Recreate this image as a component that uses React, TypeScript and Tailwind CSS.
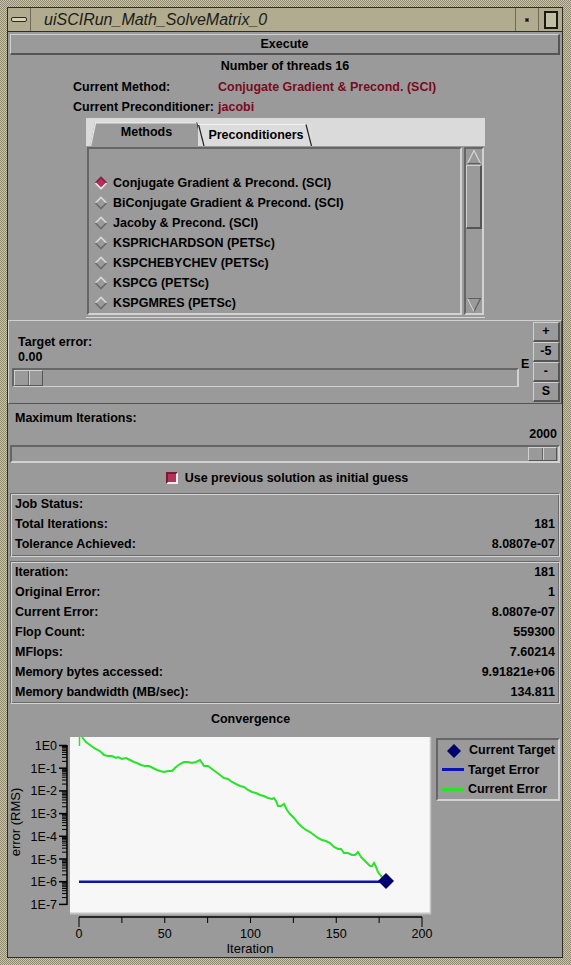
import React from "react";

const methods = [
  "Conjugate Gradient & Precond. (SCI)",
  "BiConjugate Gradient & Precond. (SCI)",
  "Jacoby & Precond. (SCI)",
  "KSPRICHARDSON (PETSc)",
  "KSPCHEBYCHEV (PETSc)",
  "KSPCG (PETSc)",
  "KSPGMRES (PETSc)",
];

const jobRows = [
  ["Job Status:", ""],
  ["Total Iterations:", "181"],
  ["Tolerance Achieved:", "8.0807e-07"],
];

const statRows = [
  ["Iteration:", "181"],
  ["Original Error:", "1"],
  ["Current Error:", "8.0807e-07"],
  ["Flop Count:", "559300"],
  ["MFlops:", "7.60214"],
  ["Memory bytes accessed:", "9.91821e+06"],
  ["Memory bandwidth (MB/sec):", "134.811"],
];

const raised =
  "border border-t-[#d0d0d0] border-l-[#d0d0d0] border-b-[#555555] border-r-[#555555]";
const sunken =
  "border-2 border-t-[#666666] border-l-[#666666] border-b-[#d2d2d2] border-r-[#d2d2d2]";
const groove =
  "border border-t-[#6a6a6a] border-l-[#6a6a6a] border-b-[#d4d4d4] border-r-[#d4d4d4] shadow-[inset_1px_1px_0_#d4d4d4,inset_-1px_-1px_0_#6a6a6a]";

const green: [number, number][] = [
  [82, 737], [86, 742], [90, 745], [94, 748], [98, 750], [101, 752], [104, 755], [108, 756],
  [112, 756], [116, 758], [118, 757], [122, 759], [126, 758], [130, 760], [134, 762], [137, 763],
  [141, 765], [145, 766], [149, 766], [153, 768], [157, 770], [160, 771], [164, 772], [168, 771],
  [172, 771], [176, 767], [180, 764], [184, 762], [188, 762], [192, 763], [196, 762], [200, 760],
  [202, 763], [204, 766], [208, 766], [212, 769], [216, 772], [220, 775], [224, 778], [228, 779],
  [232, 782], [236, 784], [240, 786], [244, 787], [248, 790], [252, 792], [256, 793], [260, 795],
  [264, 796], [268, 798], [272, 799], [274, 798], [276, 801], [278, 806], [281, 806], [284, 804],
  [287, 810], [290, 814], [294, 818], [298, 823], [302, 827], [306, 830], [310, 832], [314, 835],
  [318, 838], [322, 840], [326, 841], [330, 843], [334, 847], [338, 849], [341, 849], [344, 853],
  [348, 853], [352, 855], [355, 855], [358, 852], [361, 857], [364, 860], [367, 863], [370, 866],
  [372, 866], [374, 863], [376, 867], [378, 872], [381, 876], [384, 879], [386, 881],
];

const decadeY = (d: number) => 745.5 + d * 22.7;

function Diamond({ selected }: { selected?: boolean }) {
  return (
    <svg width="14" height="14" viewBox="0 0 14 14" className="shrink-0">
      <polygon points="7,1 13,7 7,13 1,7" fill={selected ? "#b3325a" : "#9a9a9a"} />
      <polyline points="1.5,7 7,1.5 12.5,7" fill="none" stroke={selected ? "#8a1c40" : "#d8d8d8"} strokeWidth="1.6" />
      <polyline points="1.5,7 7,12.5 12.5,7" fill="none" stroke={selected ? "#ececec" : "#6a6a6a"} strokeWidth="1.6" />
    </svg>
  );
}

function Thumb() {
  return (
    <div className={`flex h-full w-[29px] ${raised}`}>
      <div className="flex-1 border-r border-r-[#666666]" />
      <div className="flex-1 border-l border-l-[#d0d0d0]" />
    </div>
  );
}

function Chart() {
  const minor: number[] = [];
  for (let d = 0; d < 7; d++) {
    for (let k = 2; k <= 9; k++) minor.push(decadeY(d + 1) - Math.log10(k) * 22.7);
  }
  const xs = [0, 25, 50, 75, 100, 125, 150, 175, 200];
  const px = (i: number) => 79 + i * 1.715;
  const font = { fontFamily: "Liberation Sans, sans-serif", fontWeight: 400 };
  return (
    <svg width="425" height="223" viewBox="8 734 425 223" className="block" style={font}>
      <rect x="70" y="737" width="360" height="176" fill="#f7f7f7" />
      <line x1="70" y1="913.5" x2="431" y2="913.5" stroke="#c4c4c4" strokeWidth="2" />
      <line x1="430.5" y1="737" x2="430.5" y2="914" stroke="#c4c4c4" strokeWidth="1.5" />
      {/* y axis */}
      <line x1="67" y1="745" x2="67" y2="905" stroke="#000" strokeWidth="1.5" />
      {minor.map((y, i) => (
        <line key={i} x1="62" y1={y} x2="67" y2={y} stroke="#000" strokeWidth="1" />
      ))}
      {[0, 1, 2, 3, 4, 5, 6, 7].map((d) => (
        <g key={d}>
          <line x1="59" y1={decadeY(d)} x2="67" y2={decadeY(d)} stroke="#000" strokeWidth="1.5" />
          <text x="57" y={decadeY(d) + 4.5} textAnchor="end" fontSize="12.5" fill="#000">
            {d === 0 ? "1E0" : `1E-${d}`}
          </text>
        </g>
      ))}
      {/* x axis */}
      <line x1="79" y1="917" x2="422" y2="917" stroke="#000" strokeWidth="1.5" />
      {xs.map((v) => (
        <line key={v} x1={px(v)} y1="917" x2={px(v)} y2={v === 0 || v === 200 ? 927 : 923} stroke="#000" strokeWidth="1" />
      ))}
      {[0, 50, 100, 150, 200].map((v) => (
        <text key={v} x={px(v)} y="938" textAnchor="middle" fontSize="12.5" fill="#000">
          {v}
        </text>
      ))}
      <text x="250" y="953" textAnchor="middle" fontSize="13" fill="#000">
        Iteration
      </text>
      <text x="0" y="0" transform="translate(20 822) rotate(-90)" textAnchor="middle" fontSize="13" fill="#000">
        error (RMS)
      </text>
      {/* series */}
      <line x1="79" y1={decadeY(6)} x2="386" y2={decadeY(6)} stroke="#0a14b4" strokeWidth="2.5" />
      <line x1="79.5" y1="737" x2="79.5" y2="746" stroke="#28e428" strokeWidth="1.5" />
      <polyline points={green.map((p) => p.join(",")).join(" ")} fill="none" stroke="#28e428" strokeWidth="2" />
      <polygon points="386,873 394,881 386,889 378,881" fill="#00006e" />
    </svg>
  );
}

export default function App() {
  return (
    <div className="w-[571px] h-[965px] pt-[7px] pl-[7px] pr-[8px] pb-[7px] bg-[image:repeating-conic-gradient(#cdc6a6_0_25%,#8e8872_0_50%)] bg-[length:2px_2px] font-['Liberation_Sans',Arial,sans-serif]">
      <div className="h-full border border-[#2e2c24] flex flex-col">
        {/* title bar */}
        <div className="h-[24px] shrink-0 flex items-stretch bg-[#b1ab90] border-b border-b-[#2e2c24]">
          <div className="w-[23px] flex items-center justify-center border-r border-r-[#6f6a58]">
            <div className="w-[16px] h-[5px] rounded-[2px] border border-[#2a281f] bg-[#d7d1b6]" />
          </div>
          <div className="flex-1 pl-[13px] flex items-center text-[16px] italic text-[#1c1b16] leading-none">
            uiSCIRun_Math_SolveMatrix_0
          </div>
          <div className="w-[23px] flex items-center justify-center border-l border-l-[#6f6a58]">
            <div className="w-[4px] h-[4px] bg-[#111] border border-[#555]" />
          </div>
          <div className="w-[24px] flex items-center justify-center border-l border-l-[#6f6a58]">
            <div className="w-[14px] h-[18px] border-2 border-[#1a1912] bg-[#c4bea4]" />
          </div>
        </div>

        {/* content */}
        <div className="flex-1 bg-[#9a9a9a] flex flex-col text-[12.5px] font-bold text-black leading-none">
          <div className="px-[2px] pt-[2px]">
            <div className={`h-[21px] flex items-center justify-center ${raised} border-b-2 border-r-2`}>Execute</div>
          </div>
          <div className="h-[22px] flex items-center justify-center">Number of threads 16</div>
          <div className="h-[20px] flex items-center pl-[65px]">
            <span className="w-[145px]">Current Method:</span>
            <span className="text-[#7a0a1e]">Conjugate Gradient &amp; Precond. (SCI)</span>
          </div>
          <div className="h-[20px] flex items-center pl-[65px]">
            <span className="w-[145px]">Current Preconditioner:</span>
            <span className="text-[#7a0a1e]">jacobi</span>
          </div>

          {/* tab panel */}
          <div className="ml-[78px] mt-[1px] w-[399px] h-[200px] flex flex-col">
            <div className="h-[29px] bg-[#dadada] flex items-end pl-[4px]">
              <div className="relative w-[113px] h-[24px] flex items-center justify-center bg-[#9a9a9a] [clip-path:polygon(5px_0,107px_0,113px_100%,0_100%)]">
                <svg className="absolute inset-0" width="113" height="24">
                  <line x1="0.5" y1="24" x2="5.5" y2="0.5" stroke="#e6e6e6" strokeWidth="1.5" />
                  <line x1="5" y1="0.7" x2="107" y2="0.7" stroke="#e6e6e6" strokeWidth="1.5" />
                  <line x1="107" y1="0" x2="112.5" y2="24" stroke="#222" strokeWidth="1.2" />
                </svg>
                <span className="relative -mt-[3px]">Methods</span>
              </div>
              <div className="relative -ml-[5px] w-[114px] h-[22px] flex items-center justify-center bg-[#dcdcdc]">
                <svg className="absolute inset-0" width="114" height="22">
                  <line x1="0.5" y1="0.5" x2="6" y2="22" stroke="#222" strokeWidth="1.2" />
                  <line x1="0" y1="0.5" x2="108" y2="0.5" stroke="#f2f2f2" strokeWidth="1" />
                  <line x1="108" y1="0.5" x2="113.5" y2="22" stroke="#222" strokeWidth="1.2" />
                </svg>
                <span className="relative pl-[2px]">Preconditioners</span>
              </div>
            </div>
            <div className="flex-1 flex bg-[#9a9a9a] pt-[1px] pb-[2px] pl-[1px] border-b border-b-[#d6d6d6]">
              <div className={`w-[375px] h-full ${sunken} pt-[24px] pl-[5px] flex flex-col`}>
                {methods.map((m, i) => (
                  <div key={m} className="h-[20px] flex items-center gap-[5px]">
                    <Diamond selected={i === 0} />
                    <span>{m}</span>
                  </div>
                ))}
              </div>
              <div className={`ml-[2px] w-[20px] h-full ${sunken} flex flex-col`}>
                <svg width="16" height="16" viewBox="0 0 16 16" className="shrink-0">
                  <polygon points="8,1.5 14.5,14.5 1.5,14.5" fill="none" stroke="#d6d6d6" strokeWidth="1.2" />
                  <line x1="1.5" y1="14.5" x2="14.5" y2="14.5" stroke="#5e5e5e" strokeWidth="1.2" />
                </svg>
                <div className={`h-[64px] ${raised} border-b-2 border-r-2`} />
                <div className="flex-1" />
                <svg width="16" height="16" viewBox="0 0 16 16" className="shrink-0">
                  <polygon points="1.5,1.5 14.5,1.5 8,14.5" fill="none" stroke="#5e5e5e" strokeWidth="1.2" />
                  <line x1="1.5" y1="1.5" x2="8" y2="14.5" stroke="#d6d6d6" strokeWidth="1.2" />
                </svg>
              </div>
            </div>
          </div>

          {/* target error */}
          <div className={`mt-[2px] h-[84px] flex ${raised}`}>
            <div className="flex-1 flex flex-col pl-[3px]">
              <div className="h-[15px] mt-[14px] flex items-center pl-[6px]">Target error:</div>
              <div className="h-[15px] flex items-center pl-[6px]">0.00</div>
              <div className={`mt-[3px] h-[19px] w-[507px] ${sunken} border-b-[1.5px] flex`}>
                <Thumb />
              </div>
            </div>
            <div className="w-[14px] flex items-center pt-[5px] pl-[2px]">E</div>
            <div className="w-[28px] flex flex-col pt-[1px] mr-[1px]">
              <div className={`h-[20px] flex items-center justify-center ${raised} border-r-2 border-b-2`}>+</div>
              <div className={`h-[20px] flex items-center justify-center ${raised} border-r-2 border-b-2`}>-5</div>
              <div className={`h-[20px] flex items-center justify-center ${raised} border-r-2 border-b-2`}>-</div>
              <div className={`h-[20px] flex items-center justify-center ${raised} border-r-2 border-b-2`}>S</div>
            </div>
          </div>

          {/* max iterations */}
          <div className="flex flex-col px-[2px]">
            <div className="h-[16px] mt-[6px] flex items-center pl-[5px]">Maximum Iterations:</div>
            <div className="h-[17px] flex items-center justify-end pr-[3px]">2000</div>
            <div className={`mt-[2px] h-[18px] ${sunken} flex justify-end pr-[1px]`}>
              <Thumb />
            </div>
            <div className="h-[30px] flex items-center justify-center gap-[7px] pl-[4px]">
              <div className="w-[12px] h-[12px] bg-[#b3325a] border-2 border-t-[#7a1a38] border-l-[#7a1a38] border-b-[#eeeeee] border-r-[#eeeeee]" />
              <span>Use previous solution as initial guess</span>
            </div>
          </div>

          {/* job status */}
          <div className="px-[2px] flex flex-col gap-[4px]">
            <div className={`${groove} pt-0 pb-[2px] pl-[4px] pr-[4px]`}>
              {jobRows.map(([k, v]) => (
                <div key={k} className="h-[20px] flex items-center justify-between">
                  <span>{k}</span>
                  <span>{v}</span>
                </div>
              ))}
            </div>
            <div className={`${groove} pt-0 pb-[1px] pl-[4px] pr-[4px]`}>
              {statRows.map(([k, v]) => (
                <div key={k} className="h-[20px] flex items-center justify-between">
                  <span>{k}</span>
                  <span>{v}</span>
                </div>
              ))}
            </div>
          </div>

          {/* convergence */}
          <div className="flex-1 flex">
            <div className="w-[425px] flex flex-col">
              <div className="h-[30px] pl-[60px] flex items-center justify-center">Convergence</div>
              <Chart />
            </div>
            <div className="flex-1 pt-[34px] pl-[3px] pr-[2px]">
              <div className={`h-[63px] ${sunken} flex flex-col pt-[1px]`}>
                <div className="h-[20px] flex items-center">
                  <div className="w-[31px] flex justify-center">
                    <svg width="14" height="14" viewBox="0 0 14 14">
                      <polygon points="7,0 14,7 7,14 0,7" fill="#00006e" />
                    </svg>
                  </div>
                  <span>Current Target</span>
                </div>
                <div className="h-[20px] flex items-center">
                  <div className="w-[30px] pl-[4px]">
                    <div className="w-[22px] h-[3px] bg-[#0a14b4]" />
                  </div>
                  <span>Target Error</span>
                </div>
                <div className="h-[20px] flex items-center">
                  <div className="w-[30px] pl-[4px]">
                    <div className="w-[22px] h-[3px] bg-[#28e428]" />
                  </div>
                  <span>Current Error</span>
                </div>
              </div>
            </div>
          </div>
        </div>
      </div>
    </div>
  );
}
